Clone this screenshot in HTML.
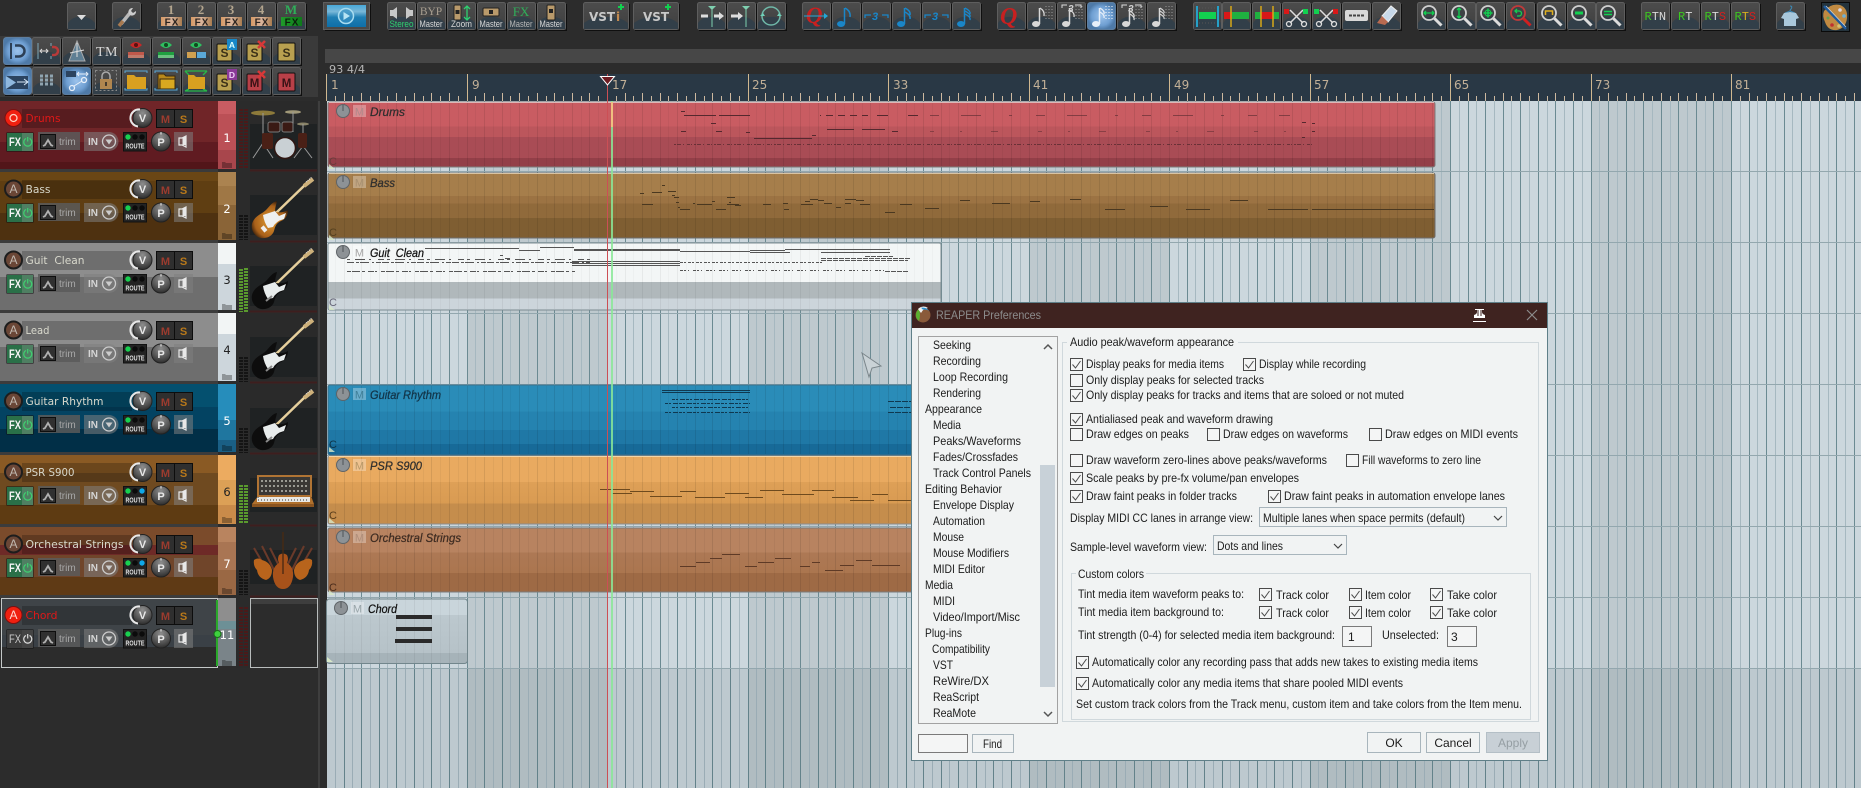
<!DOCTYPE html>
<html><head><meta charset="utf-8"><title>REAPER</title>
<style>
html,body{margin:0;padding:0;background:#2c2c2c;width:1861px;height:788px;overflow:hidden}
svg{display:block}
text{font-family:"Liberation Sans",sans-serif;white-space:pre}
.d text{font-size:12px;fill:#1b1b1b}
.ser{font-family:"Liberation Serif",serif;font-size:13px;font-weight:bold;fill:#b3a58e;text-anchor:middle}
.fxt{font-size:10px;font-weight:bold;fill:#2a2320;text-anchor:middle;letter-spacing:1px}
.lb{font-size:9.5px;fill:#d8d8d8}
.rl{font-family:"DejaVu Sans",sans-serif;font-size:12px;fill:#c2b097}
.nm{font-family:"DejaVu Sans",sans-serif;font-size:11px;fill:#d8d8cc}
.it{font-size:12px;font-style:italic;fill:#2e2e2e;stroke:#2e2e2e;stroke-width:.25}
.im{font-size:11px;fill:#7d7272;text-anchor:middle}
.tn{font-family:"DejaVu Sans",sans-serif;font-size:11.5px;text-anchor:middle}
.m{font-size:11px;font-weight:bold;fill:#9c3b2e;text-anchor:middle}
.s{font-size:11px;font-weight:bold;fill:#b8781a;text-anchor:middle}
.kv{font-size:11px;font-weight:bold;fill:#e8e8e8;text-anchor:middle}
.fxw{font-size:11.5px;font-weight:bold;fill:#f4f4f4}
.tr{font-size:10px;fill:#a8a8a8}
.in{font-size:10px;font-weight:bold;fill:#d5d5d5}
.ro{font-size:7px;font-weight:bold;fill:#e0e0e0}
.rt{font-family:"Liberation Mono",monospace;font-size:12px;fill:#d8d8d8}
</style></head>
<body>
<svg width="1861" height="788" viewBox="0 0 1861 788" xmlns="http://www.w3.org/2000/svg">
<defs>
<linearGradient id="bg" x2="0" y2="1"><stop offset="0" stop-color="#4c4c4c"/><stop offset="1" stop-color="#3f3f3f"/></linearGradient>
<g id="b"><rect x=".5" y=".5" width="28" height="27" rx="2" fill="url(#bg)" stroke="#5e5e5e"/><path d="M1 27V21Q6 14 14 15Q22 14 28 21V27Z" fill="#323f49"/><path d="M2 28.5H29.5V2" stroke="#0f0f0f" fill="none"/></g>
<radialGradient id="sel"><stop offset="0" stop-color="#9cc3ec"/><stop offset=".7" stop-color="#6f9fd2"/><stop offset="1" stop-color="#4e7aa8"/></radialGradient>
<g id="bs"><rect x=".5" y=".5" width="28" height="27" rx="3" fill="url(#sel)" stroke="#5d7ea0"/><path d="M2 28.5H29.5V2" stroke="#111" fill="none"/></g>
<linearGradient id="fx" x2="1"><stop offset="0" stop-color="#d69a66"/><stop offset=".5" stop-color="#d8b49c"/><stop offset="1" stop-color="#a87c50"/></linearGradient>
<linearGradient id="fxg" x2="1"><stop offset="0" stop-color="#1f9a2a"/><stop offset="1" stop-color="#0e7a1a"/></linearGradient>
<linearGradient id="pl" x2="0" y2="1"><stop offset="0" stop-color="#48a8d8"/><stop offset=".3" stop-color="#7ab8d8"/><stop offset=".55" stop-color="#1f7fb4"/><stop offset="1" stop-color="#0f6fa8"/></linearGradient>
<radialGradient id="kn" cx=".5" cy=".25" r=".85"><stop offset="0" stop-color="#8e8e8e"/><stop offset=".55" stop-color="#555"/><stop offset="1" stop-color="#1f1f1f"/></radialGradient>
<radialGradient id="sb" cx=".5" cy=".55" r=".6"><stop offset="0" stop-color="#e09a30"/><stop offset=".7" stop-color="#a8601a"/><stop offset="1" stop-color="#1c0e06"/></radialGradient>

<pattern id="gr" x="326" y="0" width="281" height="10" patternUnits="userSpaceOnUse">
<rect x="141" width="140" height="10" fill="#000" fill-opacity=".065"/>
<path d="M.5 0v10M18.5 0v10M35.5 0v10M53.5 0v10M70.5 0v10M88.5 0v10M105.5 0v10M123.5 0v10M141.5 0v10M158.5 0v10M176.5 0v10M193.5 0v10M211.5 0v10M228.5 0v10M246.5 0v10M263.5 0v10" stroke="#6b8a92"/>
<path d="M9.5 0v10M26.5 0v10M44.5 0v10M61.5 0v10M79.5 0v10M97.5 0v10M114.5 0v10M132.5 0v10M149.5 0v10M167.5 0v10M184.5 0v10M202.5 0v10M220.5 0v10M237.5 0v10M255.5 0v10M272.5 0v10" stroke="#a6b8c0"/>
</pattern>
<pattern id="ig" x="326" y="0" width="281" height="10" patternUnits="userSpaceOnUse">
<path d="M.5 0v10M18.5 0v10M35.5 0v10M53.5 0v10M70.5 0v10M88.5 0v10M105.5 0v10M123.5 0v10M141.5 0v10M158.5 0v10M176.5 0v10M193.5 0v10M211.5 0v10M228.5 0v10M246.5 0v10M263.5 0v10" stroke="#000" stroke-opacity=".09"/>
<path d="M9.5 0v10M26.5 0v10M44.5 0v10M61.5 0v10M79.5 0v10M97.5 0v10M114.5 0v10M132.5 0v10M149.5 0v10M167.5 0v10M184.5 0v10M202.5 0v10M220.5 0v10M237.5 0v10M255.5 0v10M272.5 0v10" stroke="#000" stroke-opacity=".045"/>
</pattern>
<pattern id="rt" x="326" y="74" width="281" height="27" patternUnits="userSpaceOnUse">
<path d="M18.5 19v8M35.5 19v8M53.5 19v8M70.5 19v8M88.5 19v8M105.5 19v8M123.5 19v8M158.5 19v8M176.5 19v8M193.5 19v8M211.5 19v8M228.5 19v8M246.5 19v8M263.5 19v8" stroke="#cdb9a0"/>
<path d="M9.5 22v5M26.5 22v5M44.5 22v5M61.5 22v5M79.5 22v5M97.5 22v5M114.5 22v5M132.5 22v5M149.5 22v5M167.5 22v5M184.5 22v5M202.5 22v5M220.5 22v5M237.5 22v5M255.5 22v5M272.5 22v5" stroke="#cdb9a0"/>
</pattern>

<!-- item colours -->
<linearGradient id="iD" x2="0" y2="1"><stop offset=".38" stop-color="#c95c62"/><stop offset=".38" stop-color="#bc565c"/><stop offset=".54" stop-color="#bc565c"/><stop offset=".54" stop-color="#a94c55"/><stop offset=".86" stop-color="#a94c55"/><stop offset=".86" stop-color="#933f48"/></linearGradient>
<linearGradient id="iB" x2="0" y2="1"><stop offset=".35" stop-color="#a67e4b"/><stop offset=".35" stop-color="#9c7343"/><stop offset=".47" stop-color="#9c7343"/><stop offset=".47" stop-color="#906a3b"/><stop offset=".69" stop-color="#906a3b"/><stop offset=".69" stop-color="#7f5e32"/></linearGradient>
<linearGradient id="iG" x2="0" y2="1"><stop offset=".58" stop-color="#f3f6f6"/><stop offset=".58" stop-color="#b0b8bb"/><stop offset=".83" stop-color="#b0b8bb"/><stop offset=".83" stop-color="#ccd5db"/></linearGradient>
<linearGradient id="iR" x2="0" y2="1"><stop offset=".38" stop-color="#2a8cb8"/><stop offset=".38" stop-color="#2583b0"/><stop offset=".64" stop-color="#2583b0"/><stop offset=".64" stop-color="#1f78a6"/><stop offset=".84" stop-color="#1f78a6"/><stop offset=".84" stop-color="#176a98"/></linearGradient>
<linearGradient id="iP" x2="0" y2="1"><stop offset=".38" stop-color="#e9aa60"/><stop offset=".38" stop-color="#dea057"/><stop offset=".7" stop-color="#d99b52"/><stop offset=".7" stop-color="#c58d4c"/></linearGradient>
<linearGradient id="iO" x2="0" y2="1"><stop offset=".38" stop-color="#b88360"/><stop offset=".38" stop-color="#ad7855"/><stop offset=".7" stop-color="#ab764f"/><stop offset=".7" stop-color="#9e6a45"/></linearGradient>
<linearGradient id="iC" x2="0" y2="1"><stop offset=".25" stop-color="#c9d5db"/><stop offset=".25" stop-color="#bcc8ce"/><stop offset=".84" stop-color="#b6c2c8"/><stop offset=".84" stop-color="#a6b3b9"/></linearGradient>

<!-- item head (no text) -->
<g id="ih"><circle cx="343" cy="9" r="6.5" fill="#8d9296" stroke="#5f6468"/><path d="M343 3v6" stroke="#4f5458"/><rect x="353" y="3" width="13" height="12" fill="#fff" fill-opacity=".3"/></g>
<path id="ft" d="M329 62l6 5h-6z" fill="#d8e8c8" fill-opacity=".8"/>

<!-- track controls (no text) -->
<g id="tc">
<rect x="22" y="8" width="110" height="19" fill="#000" fill-opacity=".22"/>
<rect x="38" y="31" width="42" height="18" fill="#5a5a5a" fill-opacity=".85"/>
<rect x="40.500" y="33.500" width="15" height="14" fill="#303030" stroke="#0e0e0e"/><path d="M43 45l2-1 3-5 3 5 2 1" stroke="#b0b0b0" stroke-width="1.800" fill="none"/>
<path d="M84 31h25a9.500 9.500 0 0 1 0 19h-25z" fill="#808080" fill-opacity=".55"/>
<circle cx="109" cy="40.500" r="6.500" fill="none" stroke="#ccc" stroke-width="1.300"/><path d="M105.500 38.500h7l-3.500 5z" fill="#ccc"/>
<rect x="123.500" y="31.500" width="23" height="18.500" fill="#232323" stroke="#111"/>
<circle cx="128" cy="36" r="2.700" fill="#18d050"/><circle cx="135" cy="36" r="2.700" fill="#0b0b0b"/><circle cx="142" cy="36" r="2.700" fill="#0b0b0b"/>
<circle cx="161" cy="40.500" r="9.500" fill="url(#kn)" stroke="#222"/><path d="M161 31v2.500" stroke="#eee"/>
<rect x="174" y="31" width="19" height="19" fill="#808080" fill-opacity=".55"/><path d="M179 37h3l4-2v11l-4-2h-3z" fill="none" stroke="#e8e8e8" stroke-width="1.200"/><path d="M182.500 37v7h3v-9z" fill="#e8e8e8"/>
<rect x="156.500" y="8.500" width="36" height="18" fill="#2f2f2f" stroke="#0d0d0d"/><path d="M174.500 8v19" stroke="#0d0d0d"/>
<circle cx="142.500" cy="17" r="9.500" fill="url(#kn)" stroke="#222"/>
<path d="M138 25.500a8.500 8.500 0 0 1 2-17" fill="none" stroke="#e8e8e8" stroke-width="2"/>
</g>
<g id="fg"><rect x="6.500" y="31.500" width="27" height="19" fill="#111"/><rect x="7" y="32" width="15" height="18" fill="#2a7048"/><rect x="22" y="32" width="11" height="18" fill="#4f7f62"/><path d="M26 37.500a4 4 0 1 0 3.500 0M27.700 36v4.500" fill="none" stroke="#3fd070" stroke-width="1.200"/></g>
<g id="fd"><rect x="6.500" y="31.500" width="27" height="19" fill="#111"/><rect x="7" y="32" width="15" height="18" fill="#3c3c3c"/><rect x="22" y="32" width="11" height="18" fill="#444"/><path d="M26 37.500a4 4 0 1 0 3.500 0M27.700 36v4.500" fill="none" stroke="#ddd" stroke-width="1.200"/></g>
<g id="ra"><circle cx="13.500" cy="17" r="8.500" fill="#6a4636" stroke="#1d1d1d" stroke-width="2"/></g>
<path id="fo" d="M222 67v-6h3l1 1h6v5z" fill="#000" fill-opacity=".3"/>

<!-- guitar -->
<g id="ne"><path d="M276 41L306 12" stroke="#e6cf9c" stroke-width="2.500"/><path d="M304 14l9-7" stroke="#cdb07a" stroke-width="4"/><path d="M306 10l6-5" stroke="#eee" stroke-dasharray="1 1"/></g>
<g id="gt"><use href="#ne"/>
<path d="M252 52C254 44 262 42 266 38C270 34 272 30 277 29C276 34 274 38 276 40C280 41 285 40 288 38C288 44 284 48 281 49C276 51 275 55 274 59C272 65 264 68 258 65C253 62 251 57 252 52Z" fill="#0d0d0d"/>
<path d="M263 43L275 39L279 44L286 41L284 47Q276 49 273 55L268 56Q264 50 263 43Z" fill="#e8ecec"/><path d="M266 58l6-5" stroke="#8a8a8a" stroke-width="2"/></g>

<!-- checkbox -->
<g id="c"><rect x=".5" y=".5" width="12" height="12" fill="#f4f5f5" stroke="#4a4a4a"/><path d="M2.500 6.500l3 3.500 5-7" fill="none" stroke="#4a4a4a"/></g>
<g id="u"><rect x=".5" y=".5" width="12" height="12" fill="#f4f5f5" stroke="#4a4a4a"/></g>
<g id="mg"><circle cx="12" cy="11" r="7" fill="#2f3a42" fill-opacity=".4" stroke="#d0d0d0" stroke-width="1.800"/><path d="M17.500 16.500l7 7" stroke="#dcdcdc" stroke-width="3"/></g>
<g id="nt"><ellipse cx="9" cy="22" rx="4" ry="3" fill="currentColor"/><path d="M12.500 22V6" stroke="currentColor" stroke-width="1.500"/></g>
<g id="dg"><path d="M19 4v13M22 4v13M25 4v13" stroke="#999" stroke-dasharray="1 2"/></g>
<g id="sc"><path d="M8 8l13 13M21 8L8 21" stroke="#ddd" stroke-width="1.500"/><circle cx="7" cy="22" r="2.500" fill="none" stroke="#ddd" stroke-width="1.300"/><circle cx="22" cy="22" r="2.500" fill="none" stroke="#ddd" stroke-width="1.300"/></g>
</defs>

<rect width="1861" height="788" fill="#2c2c2c"/>

<!-- top row toolbar -->
<g transform="translate(67,2)"><use href="#b"/><path d="M10 13h9l-4.500 5z" fill="#ddd"/></g>
<g transform="translate(112,2)"><use href="#b"/><path d="M9 22l9-11" stroke="#b9b9b9" stroke-width="3.500"/><path d="M17 12a4 4 0 0 1 4-6l-2 3 2 2 3-2a4 4 0 0 1-6 4" fill="#ccc"/><path d="M7 24l4-5" stroke="#a87a50" stroke-width="3.500"/></g>
<g transform="translate(157,2)"><use href="#b"/><text class="ser" x="14" y="12">1</text><rect x="4" y="15" width="21" height="9" fill="url(#fx)"/><text class="fxt" x="15" y="23.500">FX</text></g>
<g transform="translate(187,2)"><use href="#b"/><text class="ser" x="14" y="12">2</text><rect x="4" y="15" width="21" height="9" fill="url(#fx)"/><text class="fxt" x="15" y="23.500">FX</text></g>
<g transform="translate(217,2)"><use href="#b"/><text class="ser" x="14" y="12">3</text><rect x="4" y="15" width="21" height="9" fill="url(#fx)"/><text class="fxt" x="15" y="23.500">FX</text></g>
<g transform="translate(247,2)"><use href="#b"/><text class="ser" x="14" y="12">4</text><rect x="4" y="15" width="21" height="9" fill="url(#fx)"/><text class="fxt" x="15" y="23.500">FX</text></g>
<g transform="translate(277,2)"><use href="#b"/><text class="ser" x="14" y="12" style="fill:#2fae5a">M</text><rect x="4" y="15" width="21" height="9" fill="url(#fxg)"/><text class="fxt" x="15" y="23.500" style="fill:#0c1f0c">FX</text></g>
<g transform="translate(323,2)"><rect x=".5" y=".5" width="46" height="27" fill="#4a4a4a" stroke="#5e5e5e"/><path d="M2 28.500H47.500V2" stroke="#0f0f0f" fill="none"/><rect x="4" y="3" width="39" height="22" fill="url(#pl)"/><circle cx="23" cy="14" r="7.500" fill="#3b93c4" fill-opacity=".7" stroke="#a8dcf0" stroke-width="1.500"/><path d="M20.500 10l6.500 4-6.500 4z" fill="#b8e4f4"/></g>
<g transform="translate(387,2)"><use href="#b"/><path d="M3 8h3l4-3v12l-4-3H3zM19 5l4 3h3v6h-3l-4 3z" fill="#c8c8c8"/><text class="lb" x="2.500" y="25" textLength="24" lengthAdjust="spacingAndGlyphs" style="fill:#2fd070">Stereo</text></g>
<g transform="translate(417,2)"><use href="#b"/><text class="ser" x="14" y="13" style="font-weight:normal;font-size:11.500px;fill:#a89e90">BYP</text><text class="lb" x="2.500" y="25" textLength="23" lengthAdjust="spacingAndGlyphs">Master</text></g>
<g transform="translate(447,2)"><use href="#b"/><rect x="7" y="3" width="7" height="15" rx="1" fill="#b99a6b" stroke="#222"/><rect x="8.500" y="8" width="4" height="4" fill="#222"/><path d="M20 4v14M17 7l3-3 3 3M17 15l3 3 3-3" stroke="#2fd070" fill="none" stroke-width="1.300"/><text class="lb" x="4" y="25" textLength="21" lengthAdjust="spacingAndGlyphs">Zoom</text></g>
<g transform="translate(477,2)"><use href="#b"/><rect x="6" y="6" width="16" height="8" rx="1" fill="#b99a6b" stroke="#222"/><rect x="12" y="8" width="4" height="4" fill="#222"/><text class="lb" x="2.500" y="25" textLength="23" lengthAdjust="spacingAndGlyphs">Master</text></g>
<g transform="translate(507,2)"><use href="#b"/><text class="ser" x="14" y="14" style="font-weight:normal;font-size:13px;fill:#2fae5a">FX</text><text class="lb" x="2.500" y="25" textLength="23" lengthAdjust="spacingAndGlyphs" style="fill:#b8b8b8">Master</text></g>
<g transform="translate(537,2)"><use href="#b"/><rect x="10" y="3" width="8" height="15" rx="1" fill="#b99a6b" stroke="#222"/><rect x="12" y="7" width="4" height="4" fill="#222"/><text class="lb" x="2.500" y="25" textLength="23" lengthAdjust="spacingAndGlyphs">Master</text></g>
<g transform="translate(583,2)"><rect x=".5" y=".5" width="45" height="27" rx="2" fill="url(#bg)" stroke="#5e5e5e"/><path d="M1 27V21Q10 14 23 15Q36 14 45 21V27Z" fill="#323f49"/><path d="M2 28.500H46.500V2" stroke="#0f0f0f" fill="none"/><text x="6" y="19" style="font-family:'DejaVu Sans',sans-serif;font-weight:bold;font-size:12px;fill:#c8c8c8">VST</text><text x="33" y="19" style="font-family:'DejaVu Sans',sans-serif;font-weight:bold;font-size:12px;fill:#c28a50">i</text><path d="M38 2v6M35 5h6" stroke="#12d050" stroke-width="2"/></g>
<g transform="translate(633,2)"><rect x=".5" y=".5" width="45" height="27" rx="2" fill="url(#bg)" stroke="#5e5e5e"/><path d="M1 27V21Q10 14 23 15Q36 14 45 21V27Z" fill="#323f49"/><path d="M2 28.500H46.500V2" stroke="#0f0f0f" fill="none"/><text x="10" y="19" style="font-family:'DejaVu Sans',sans-serif;font-weight:bold;font-size:12px;fill:#c8c8c8">VST</text><path d="M35 2v6M32 5h6" stroke="#12d050" stroke-width="2"/></g>

<g transform="translate(697,2)"><use href="#b"/><path d="M11 4h8l-4 4z" fill="#7fd0b0"/><path d="M15 6v19" stroke="#7fd0b0"/><path d="M4 14h7M17 14h5" stroke="#ddd" stroke-width="3"/><path d="M22 10l5 4-5 4z" fill="#ddd"/></g>
<g transform="translate(727,2)"><use href="#b"/><path d="M15 4h8l-4 4z" fill="#7fd0b0"/><path d="M19 6v19" stroke="#7fd0b0"/><path d="M4 14h7" stroke="#ddd" stroke-width="3"/><path d="M11 10l5 4-5 4z" fill="#ddd"/></g>
<g transform="translate(757,2)"><use href="#b"/><path d="M5 14a9 9 0 0 1 18 0a9 9 0 0 1-18 0" fill="none" stroke="#6fb8a8" stroke-width="1.500"/><path d="M3 14l3-3 2 3zM25 14l-3-3-2 3z" fill="#6fd0b8"/></g>

<g transform="translate(802,2)"><use href="#b"/><text x="4" y="21" style="font-family:'Liberation Serif',serif;font-size:23px;font-style:italic;font-weight:bold;fill:#c82020">Q</text><path d="M2 14h22" stroke="#22a8d8"/><path d="M22 11l4 3-4 3z" fill="#22a8d8"/></g>
<g transform="translate(832,2)" color="#1a86c8"><use href="#b"/><use href="#nt"/><path d="M13 6q6 3 5 9" fill="none" stroke="#1a86c8" stroke-width="1.500"/></g>
<g transform="translate(862,2)"><use href="#b"/><path d="M3 16v-3h6M26 16v-3h-6" stroke="#1a86c8" fill="none" stroke-width="1.300"/><text x="10" y="18" style="font-size:11px;font-weight:bold;font-style:italic;fill:#1a86c8">3</text></g>
<g transform="translate(892,2)" color="#1a86c8"><use href="#b"/><use href="#nt"/><path d="M13 6q6 3 5 7M13 10q6 3 5 7" fill="none" stroke="#1a86c8" stroke-width="1.500"/></g>
<g transform="translate(922,2)"><use href="#b"/><path d="M3 16v-3h6M26 16v-3h-6" stroke="#1a86c8" fill="none" stroke-width="1.300"/><text x="10" y="18" style="font-size:11px;font-weight:bold;font-style:italic;fill:#1a86c8">3</text></g>
<g transform="translate(952,2)" color="#1a86c8"><use href="#b"/><use href="#nt"/><path d="M13 6q6 3 5 6M13 9q6 3 5 6M13 12q6 3 5 6" fill="none" stroke="#1a86c8" stroke-width="1.300"/></g>

<g transform="translate(997,2)"><use href="#b"/><text x="3" y="22" style="font-family:'Liberation Serif',serif;font-size:24px;font-style:italic;font-weight:bold;fill:#c82020">Q</text></g>
<g transform="translate(1027,2)" color="#d8d8d8"><use href="#b"/><use href="#dg"/><use href="#nt"/><path d="M13 6q5 3 4 8" fill="none" stroke="#d8d8d8" stroke-width="1.300"/></g>
<g transform="translate(1057,2)" color="#d8d8d8"><use href="#b"/><use href="#dg"/><use href="#nt"/><path d="M5 6V3h5M18 3h6v3" stroke="#ddd" fill="none"/><text x="11" y="10" style="font-size:10px;font-weight:bold;font-style:italic;fill:#d0d0d0">3</text><path d="M13 8q5 3 4 7" fill="none" stroke="#d8d8d8" stroke-width="1.300"/></g>
<g transform="translate(1087,2)" color="#e8f0fa"><use href="#bs"/><path d="M19 4v13M22 4v13M25 4v13" stroke="#fff" stroke-dasharray="1 2"/><use href="#nt"/><path d="M13 6q5 3 4 6M13 10q5 3 4 6" fill="none" stroke="#e8f0fa" stroke-width="1.300"/></g>
<g transform="translate(1117,2)" color="#d8d8d8"><use href="#b"/><use href="#dg"/><use href="#nt"/><path d="M5 6V3h5M18 3h6v3" stroke="#ddd" fill="none"/><text x="11" y="10" style="font-size:10px;font-weight:bold;font-style:italic;fill:#d0d0d0">3</text><path d="M13 9q5 3 4 6M13 12q5 3 4 6" fill="none" stroke="#d8d8d8" stroke-width="1.300"/></g>
<g transform="translate(1147,2)" color="#d8d8d8"><use href="#b"/><use href="#dg"/><use href="#nt"/><path d="M13 6q5 3 4 5M13 9q5 3 4 5M13 12q5 3 4 5" fill="none" stroke="#d8d8d8" stroke-width="1.200"/></g>

<g transform="translate(1193,2)"><use href="#b"/><path d="M4 4v21M25 4v21" stroke="#25a0c8" stroke-width="2"/><rect x="6" y="10" width="17" height="7" fill="#12d050"/><path d="M6 6h17M6 21h17" stroke="#555" stroke-dasharray="1 2"/></g>
<g transform="translate(1222,2)"><use href="#b"/><rect x="2" y="10" width="8" height="7" fill="#d81818"/><rect x="10" y="10" width="17" height="7" fill="#1fb040"/><path d="M9 4v21" stroke="#d8a818" stroke-width="1.500"/></g>
<g transform="translate(1252,2)"><use href="#b"/><rect x="3" y="10" width="6" height="7" fill="#1fb040"/><rect x="9" y="10" width="12" height="7" fill="#d81818"/><rect x="21" y="10" width="6" height="7" fill="#1fb040"/><path d="M9 4v21M21 4v21" stroke="#d8a818" stroke-width="1.500"/></g>
<g transform="translate(1282,2)"><use href="#b"/><use href="#sc"/><rect x="2" y="7" width="5" height="5" fill="#d81818"/><rect x="21" y="7" width="5" height="5" fill="#12d050"/></g>
<g transform="translate(1312,2)"><use href="#b"/><use href="#sc"/><rect x="2" y="7" width="5" height="5" fill="#12d050"/><rect x="21" y="7" width="5" height="5" fill="#d81818"/></g>
<g transform="translate(1342,2)"><use href="#b"/><rect x="3" y="8" width="23" height="11" rx="2" fill="#d8d8d8"/><path d="M7 13.500h15" stroke="#444" stroke-width="2" stroke-dasharray="3 1"/></g>
<g transform="translate(1372,2)"><use href="#b"/><path d="M10 14l9-10 6 5-9 11z" fill="#c8d8e8" stroke="#eee"/><path d="M5 21l5-7 6 6-3 3z" fill="#b86a50"/></g>

<g transform="translate(1417,2)"><use href="#b"/><use href="#mg"/><path d="M7.500 11h9M9 9l-2 2 2 2M15 9l2 2-2 2" stroke="#12d050" fill="none" stroke-width="1.300"/></g>
<g transform="translate(1447,2)"><use href="#b"/><use href="#mg"/><path d="M12 6.500v9M10 8l2-2 2 2M10 14l2 2 2-2" stroke="#12d050" fill="none" stroke-width="1.300"/></g>
<g transform="translate(1476,2)"><use href="#b"/><use href="#mg"/><path d="M12 6.500v9M7.500 11h9" stroke="#12d050" stroke-width="1.500"/><circle cx="12" cy="11" r="3" fill="none" stroke="#12d050"/></g>
<g transform="translate(1506,2)"><use href="#b"/><circle cx="12" cy="11" r="7" fill="#2f3a42" fill-opacity=".4" stroke="#c03a3a" stroke-width="1.800"/><path d="M17.500 16.500l7 7" stroke="#d02020" stroke-width="3"/><path d="M9 9h4a2.500 2.500 0 0 1 0 5h-2M11 7L9 9l2 2" stroke="#12d050" fill="none" stroke-width="1.300"/></g>
<g transform="translate(1537,2)"><use href="#b"/><use href="#mg"/><path d="M8.500 13V9h7v4" stroke="#e0b020" fill="none" stroke-width="1.500"/></g>
<g transform="translate(1567,2)"><use href="#b"/><use href="#mg"/><rect x="8" y="9.500" width="8" height="3" fill="#12d050"/></g>
<g transform="translate(1596,2)"><use href="#b"/><use href="#mg"/><path d="M8 9.500h8M8 12.500h8" stroke="#12d050" stroke-width="1.500"/></g>

<g transform="translate(1641,2)"><use href="#b"/><text class="rt" x="3.500" y="18"><tspan fill="#3cc820">R</tspan>TN</text></g>
<g transform="translate(1671,2)"><use href="#b"/><text class="rt" x="7" y="18"><tspan fill="#3cc820">R</tspan>T</text></g>
<g transform="translate(1701,2)"><use href="#b"/><text class="rt" x="3.500" y="18"><tspan fill="#3cc820">R</tspan>T<tspan fill="#d02020">S</tspan></text></g>
<g transform="translate(1731,2)"><use href="#b"/><text class="rt" x="3.500" y="18"><tspan fill="#3cc820">R</tspan><tspan fill="#d8b020">T</tspan><tspan fill="#d02020">S</tspan></text></g>
<g transform="translate(1776,2)"><use href="#b"/><path d="M14 4q3 0 1 3q-1 1-1 2M9 11l5-2 5 2" stroke="#3b8ab8" fill="none"/><path d="M8 11l6-1 6 1 3 5-3 1v7H8v-7l-3-1z" fill="#a9c8dc"/></g>
<g transform="translate(1821,2)"><rect x=".5" y=".5" width="28" height="29" fill="#24333c" stroke="#0a0a0a"/><path d="M3 9q7-8 16-6q8 3 7 13q-1 10-10 12q-9 1-12-8q-3-6-1-11z" fill="#c08a42"/><path d="M3 4l22 23" stroke="#1f5a9c" stroke-width="2.500"/><path d="M5 4l20 21" stroke="#cfd6dc" stroke-width=".7"/><circle cx="19" cy="8" r="1.800" fill="#d8d8e8"/><circle cx="23" cy="14" r="1.800" fill="#6cb0d8"/><circle cx="11" cy="23" r="1.800" fill="#c03030"/><circle cx="18" cy="24" r="1.800" fill="#d8c070"/><circle cx="7" cy="16" r="1.500" fill="#68a050"/></g>

<!-- left second/third row panel -->
<rect x="0" y="36" width="318" height="61" fill="#3a3a3a"/>
<g transform="translate(3,37)"><use href="#bs"/><path d="M8 6v16" stroke="#2c3f55" stroke-width="2"/><path d="M12 8.500h4a5.500 5.500 0 0 1 0 11h-4" fill="none" stroke="#2c3f55" stroke-width="2.500"/></g>
<g transform="translate(32,37)"><use href="#b"/><path d="M6 6v16" stroke="#7fa8b8"/><path d="M9 14h6M10 12l-2 2 2 2M14 12l2 2-2 2" stroke="#ddd" fill="none"/><path d="M20 10h2a4 4 0 0 1 0 8h-2" fill="none" stroke="#b83a3a" stroke-width="2.500"/><path d="M19 6v3M19 19v3" stroke="#7fa8b8"/></g>
<g transform="translate(62,37)"><use href="#b"/><path d="M15 4L7 24h16z" fill="#5f7f94" stroke="#aaa"/><path d="M15 6v14M8 16l14-3" stroke="#ddd"/></g>
<g transform="translate(92,37)"><use href="#b"/><text x="4" y="19" style="font-family:'Liberation Serif',serif;font-size:14px;fill:#d8d8d8;letter-spacing:.5px">TM</text></g>
<g transform="translate(122,37)"><use href="#b"/><path d="M8 8q6-6 12 0q-6 6-12 0z" fill="#c82828"/><circle cx="14" cy="8" r="2" fill="#5a1010"/><rect x="6" y="15" width="16" height="3" fill="#c0584a"/><rect x="6" y="18" width="16" height="3" fill="#c07a6a"/></g>
<g transform="translate(152,37)"><use href="#b"/><path d="M8 8q6-6 12 0q-6 6-12 0z" fill="#2fc060"/><circle cx="14" cy="8" r="2" fill="#0f4a20"/><rect x="6" y="15" width="16" height="3" fill="#1fa040"/><rect x="6" y="18" width="16" height="3" fill="#6cc080"/></g>
<g transform="translate(182,37)"><use href="#b"/><path d="M8 8q6-6 12 0q-6 6-12 0z" fill="#2fc060"/><circle cx="14" cy="8" r="2" fill="#0f4a20"/><rect x="5" y="15" width="9" height="6" fill="#d0a050"/><rect x="15" y="15" width="9" height="6" fill="#5aa8d8"/></g>
<g transform="translate(212,37)"><use href="#b"/><rect x="5" y="7" width="15" height="17" rx="1" fill="#b8a050" stroke="#111"/><text x="12.500" y="20" style="font-size:12px;font-weight:bold;fill:#3a3018;text-anchor:middle">S</text><rect x="15" y="2" width="10" height="11" fill="#1888c8"/><text x="20" y="11" style="font-size:8.500px;font-weight:bold;fill:#dff;text-anchor:middle">A</text></g>
<g transform="translate(242,37)"><use href="#b"/><rect x="5" y="7" width="15" height="17" rx="1" fill="#b8a050" stroke="#111"/><text x="12.500" y="20" style="font-size:12px;font-weight:bold;fill:#3a3018;text-anchor:middle">S</text><path d="M16 4l7 7M23 4l-7 7" stroke="#d83838" stroke-width="2.500"/></g>
<g transform="translate(272,37)"><use href="#b"/><rect x="6" y="6" width="17" height="18" rx="1" fill="#b8a050" stroke="#111"/><text x="14.500" y="20" style="font-size:12px;font-weight:bold;fill:#3a3018;text-anchor:middle">S</text></g>

<g transform="translate(3,67)"><use href="#bs"/><rect x="3" y="9" width="22" height="13" fill="#2c4460"/><path d="M3 9l10 6.500-10 6.500z" fill="#8fb8de"/><path d="M14 15h11M21 12l4 3-4 3" stroke="#d8e8f8" fill="none"/></g>
<g transform="translate(32,67)"><use href="#b"/><path d="M8 9h14M8 13h14M8 17h14" stroke="#8fa4b0" stroke-width="3" stroke-dasharray="3 2"/></g>
<g transform="translate(62,67)"><use href="#bs"/><rect x="4" y="4" width="10" height="6" fill="#2c4460"/><path d="M16 7h9M17 5l-2 2 2 2M24 5l2 2-2 2" stroke="#e8f0fa" fill="none"/><circle cx="10" cy="21" r="2.500" fill="none" stroke="#e8f0fa" stroke-width="1.300"/><circle cx="22" cy="13" r="2.500" fill="none" stroke="#e8f0fa" stroke-width="1.300"/><path d="M12 19l8-5" stroke="#e8f0fa"/></g>
<g transform="translate(92,67)"><use href="#b"/><rect x="3.500" y="3.500" width="21" height="20" fill="none" stroke="#888" stroke-dasharray="2 2"/><path d="M10 12V9a4 4 0 0 1 8 0v3" fill="none" stroke="#aaa" stroke-width="1.500"/><rect x="8" y="12" width="12" height="10" fill="#b0864f"/><path d="M14 15v4" stroke="#222" stroke-width="1.500"/></g>
<g transform="translate(122,67)"><use href="#b"/><path d="M3 6v-2h22v2M3 21v2h22v-2" stroke="#5aa8d8" fill="none"/><path d="M5 8h7l2 2h10v12H5z" fill="#d8a020"/></g>
<g transform="translate(152,67)"><use href="#b"/><path d="M3 6v-2h22v2M3 21v2h22v-2" stroke="#5aa8d8" fill="none"/><path d="M6 7h6l2 2h9v13H6z" fill="#b8881a" stroke="#3a2a10"/><rect x="8" y="12" width="15" height="10" fill="#d8a820" stroke="#3a2a10"/></g>
<g transform="translate(182,67)"><use href="#b"/><path d="M3 4h22M3 24h22M3 4l4 4M25 4l-4 4M3 24l4-2M25 24l-4-2" stroke="#28b848" fill="none" stroke-width="1.300"/><path d="M6 8h6l2 2h9v12H6z" fill="#d8a020"/></g>
<g transform="translate(212,67)"><use href="#b"/><rect x="5" y="7" width="15" height="17" rx="1" fill="#b8a050" stroke="#111"/><text x="12.500" y="20" style="font-size:12px;font-weight:bold;fill:#3a3018;text-anchor:middle">S</text><rect x="15" y="2" width="10" height="11" fill="#8a3a98"/><text x="20" y="11" style="font-size:8.500px;font-weight:bold;fill:#f0d0f8;text-anchor:middle">D</text></g>
<g transform="translate(242,67)"><use href="#b"/><rect x="5" y="7" width="15" height="17" rx="1" fill="#b84048" stroke="#111"/><text x="12.500" y="20" style="font-size:11.500px;font-weight:bold;fill:#3a1216;text-anchor:middle">M</text><path d="M16 4l7 7M23 4l-7 7" stroke="#d83838" stroke-width="2.500"/></g>
<g transform="translate(272,67)"><use href="#b"/><rect x="6" y="6" width="17" height="18" rx="1" fill="#b84048" stroke="#111"/><text x="14.500" y="20" style="font-size:11.500px;font-weight:bold;fill:#3a1216;text-anchor:middle">M</text></g>

<!-- ruler -->
<rect x="325" y="49" width="1536" height="14" fill="#474747"/>
<text x="329" y="73" textLength="36" lengthAdjust="spacingAndGlyphs" style="font-family:'DejaVu Sans',sans-serif;font-size:10.500px;fill:#b5b5b5">93 4/4</text>
<rect x="326" y="74" width="1535" height="27" fill="#293845"/>
<rect x="326" y="74" width="1535" height="27" fill="url(#rt)"/>
<path d="M326.500 74v27M467.500 74v27M607.500 74v27M748.500 74v27M888.500 74v27M1029.500 74v27M1169.500 74v27M1310.500 74v27M1450.500 74v27M1591.500 74v27M1731.500 74v27" stroke="#d0b890"/>
<g class="rl"><text class="rl" x="331" y="89">1</text><text class="rl" x="472" y="89">9</text><text class="rl" x="612" y="89">17</text><text class="rl" x="752" y="89">25</text><text class="rl" x="893" y="89">33</text><text class="rl" x="1033" y="89">41</text><text class="rl" x="1174" y="89">49</text><text class="rl" x="1314" y="89">57</text><text class="rl" x="1454" y="89">65</text><text class="rl" x="1595" y="89">73</text><text class="rl" x="1735" y="89">81</text></g>

<!-- arrange -->
<rect x="327" y="101" width="1534" height="687" fill="#ccd7dd"/>
<rect x="327" y="101" width="1534" height="687" fill="url(#gr)"/>
<path d="M327 171.500H1861M327 242.500H1861M327 313.500H1861M327 384.500H1861M327 455.500H1861M327 526.500H1861M327 597.500H1861M327 668.500H1861" stroke="#93a7ae"/>
<rect x="327" y="669" width="1534" height="119" fill="#0a2a35" fill-opacity=".08"/>
<rect x="318" y="101" width="2" height="687" fill="#3e3e3e"/>

<!-- items -->
<rect x="328" y="102" width="1107" height="65" rx="2" fill="url(#iD)" stroke="#7c7c7c"/><rect x="329" y="103" width="1105" height="63" fill="url(#ig)"/><path d="M329 102.500H1434" stroke="#dfb6b6"/>
<rect x="328" y="173" width="1107" height="65" rx="2" fill="url(#iB)" stroke="#6c6c6c"/><rect x="329" y="174" width="1105" height="63" fill="url(#ig)"/><path d="M329 173.500H1434" stroke="#d8c4a4"/>
<rect x="328" y="243" width="613" height="67" rx="2" fill="url(#iG)" stroke="#7c8c92"/><rect x="329" y="244" width="611" height="65" fill="url(#ig)" opacity=".6"/>
<rect x="328" y="385" width="1107" height="70" rx="2" fill="url(#iR)" stroke="#3f6f88"/><rect x="329" y="386" width="1105" height="68" fill="url(#ig)"/>
<rect x="328" y="456" width="1107" height="68" rx="2" fill="url(#iP)" stroke="#8c8c8c"/><rect x="329" y="457" width="1105" height="66" fill="url(#ig)"/><path d="M329 456.500H1434" stroke="#f3d6a8"/>
<rect x="328" y="528" width="1107" height="64" rx="2" fill="url(#iO)" stroke="#7a7a7a"/><rect x="329" y="529" width="1105" height="62" fill="url(#ig)"/>
<rect x="326.500" y="599" width="141" height="64.500" rx="3" fill="url(#iC)" stroke="#72868c"/>
<rect x="327" y="600" width="140" height="63" fill="url(#ig)" opacity=".6"/>

<g transform="translate(0,102)"><use href="#ih"/><text class="im" x="359.500" y="13.500" style="fill:#b08a8a">M</text><text class="it" x="370" y="14" textLength="35" lengthAdjust="spacingAndGlyphs">Drums</text><text x="329" y="63" style="font-size:11px;fill:#6a3c3c">C</text><use href="#ft"/></g>
<g transform="translate(0,173)"><use href="#ih"/><text class="im" x="359.500" y="13.500" style="fill:#a89070">M</text><text class="it" x="370" y="14" textLength="25" lengthAdjust="spacingAndGlyphs">Bass</text><text x="329" y="63" style="font-size:11px;fill:#54401f">C</text><use href="#ft"/></g>
<g transform="translate(0,243)"><use href="#ih"/><text class="im" x="359.500" y="13.500" style="fill:#a5a5a5">M</text><text class="it" x="370" y="14" textLength="54" lengthAdjust="spacingAndGlyphs" style="fill:#111;stroke:#111">Guit  Clean</text><text x="329" y="63" style="font-size:11px;fill:#667">C</text><use href="#ft"/></g>
<g transform="translate(0,385)"><use href="#ih"/><text class="im" x="359.500" y="13.500" style="fill:#3f7f98">M</text><text class="it" x="370" y="14" textLength="71" lengthAdjust="spacingAndGlyphs" style="fill:#123448;stroke:#123448">Guitar Rhythm</text><text x="329" y="63" style="font-size:11px;fill:#0e3448">C</text><use href="#ft"/></g>
<g transform="translate(0,456)"><use href="#ih"/><text class="im" x="359.500" y="13.500" style="fill:#b89868">M</text><text class="it" x="370" y="14" textLength="52" lengthAdjust="spacingAndGlyphs">PSR S900</text><text x="329" y="63" style="font-size:11px;fill:#5a3e1c">C</text><use href="#ft"/></g>
<g transform="translate(0,528)"><use href="#ih"/><text class="im" x="359.500" y="13.500" style="fill:#b08e7a">M</text><text class="it" x="370" y="14" textLength="91" lengthAdjust="spacingAndGlyphs" style="fill:#3e2c22;stroke:#3e2c22">Orchestral Strings</text><text x="329" y="63" style="font-size:11px;fill:#4a2c1c">C</text><use href="#ft"/></g>
<g transform="translate(-2,599)"><use href="#ih"/><text class="im" x="359.500" y="13.500" style="fill:#98a4a8">M</text><path d="M329 58l6 5h-6z" fill="#d8e8c8"/><text class="it" x="370" y="14" textLength="29" lengthAdjust="spacingAndGlyphs" style="fill:#111;stroke:#111">Chord</text></g>
<path d="M396 617h36M396 629h36M395 641h37" stroke="#2a2a2a" stroke-width="4"/>

<!-- MIDI notes -->
<g fill="none" stroke="#55282e">
<path d="M681 111.500h4M684 115.500h32M719 115.500h31M711 123.500h5M681 131.500h5M716 131.500h6M746 132.500h4M754 138.500h58M812 135.500h4M827 129.500h27M862 129.500h23M892 131.500h6M820 115.500h1M826 115.500h7M838 115.500h7M850 115.500h7M862 115.500h6M877 115.500h11M908 115.500h10M1302 122.500h4M1312 123.500h3M1312 131.500h3M1302 137.500h3"/>
<path d="M674 144.500H1314" stroke-opacity=".75" stroke-dasharray="2 1 4 2 1 3 3 1 1 2"/>
<path d="M930 115.500H1290" stroke-opacity=".6" stroke-dasharray="9 22 20 28 3 24"/>
<path d="M930 131.500H1290" stroke-opacity=".5" stroke-dasharray="4 26 2 29 7 40"/>
</g>
<g fill="none" stroke="#4a3820">
<path d="M640 193.500h4M652 192.500h10M662 185.500h3M668 191.500h8M672 195.500h3M674 197.500h5M642 204.500h11M676 202.500h3M678 207.500h2M680 209.500h10M693 203.500h2M697 204.500h15M712 201.500h3M727 197.500h8M729 202.500h2M727 204.500h12M735 205.500h6M716 209.500h10M763 204.500h8M783 203.500h5M784 209.500h5M801 204.500h12M805 201.500h5M810 199.500h8M818 200.500h6M824 203.500h8M836 207.500h5M845 203.500h6M845 199.500h11M856 200.500h8M860 204.500h10M885 212.500h10M900 204.500h12M925 208.500h14M960 200.500h10M992 203.500h18M1030 201.500h10M1070 199.500h11M1105 209.500h20M1150 206.500h18M1186 209.500h24M1230 200.500h18M1268 209.500h40M1312 209.500h122"/>
</g>
<g fill="none" stroke="#555">
<path d="M425 248.500h94M519 250.500h21M540 247.500h34M574 249.500h106M574 250.500h106M680 251.500h70M750 250.500h35M785 249.500h36M821 249.500h69M750 252.500h40M821 252.500h69"/>
<path d="M347 262.500H590" stroke-dasharray="7 2 3 1 9 3 2 2 5 1"/>
<path d="M347 259.500H590" stroke-dasharray="3 5 10 4 2 7 6 3"/>
<path d="M347 271.500H575" stroke-dasharray="4 1 8 2 3 3 6 1 2 4"/>
<path d="M572 261.500H680M572 263.500H680M572 265.500h108"/>
<path d="M680 262.500H822" stroke-dasharray="3 1 2 2"/>
<path d="M680 270.500H885" stroke-dasharray="3 1 2 2 1 4"/>
<path d="M500 255.500h3M505 258.500h5"/>
<path d="M821 258.500H908M821 260.500H908M865 256.500h28M885 271.500h24" stroke-dasharray="5 1"/>
<path d="M908 258.500h2"/>
</g>
<g fill="none" stroke="#0f3850">
<path d="M662 390.500h88M662 392.500h88"/>
<path d="M672 399.500h78M665 403.500h85M672 407.500h78M665 412.500h85" stroke-dasharray="3 1 2 2 5 1"/>
<path d="M888 401.500h24M890 407.500h22M888 412.500h24" stroke-dasharray="6 1"/>
</g>
<g fill="none" stroke="#6e4a1e">
<path d="M600 489.500h30M612 493.500h20M630 491.500h24M650 496.500h32M680 491.500h16M695 497.500h30M725 493.500h24M745 497.500h18M760 490.500h24M782 494.500h32M812 490.500h22M832 497.500h26M850 500.500h24M872 494.500h16M888 500.500h24"/>
</g>
<g fill="none" stroke="#5e3a26">
<path d="M680 566.500h16M696 562.500h14M710 558.500h12M722 554.500h18M745 566.500h12M758 562.500h16M775 558.500h16M800 566.500h10M812 562.500h8M825 570.500h18M840 565.500h14M856 560.500h16M872 565.500h28"/>
</g>

<!-- cursors -->
<path d="M607.500 74V788" stroke="#cc4f55"/>
<path d="M612 101V788" stroke="#8ae898" stroke-opacity=".85" stroke-width="2"/>
<path d="M612 102V127" stroke="#f0c080" stroke-width="2"/>
<path d="M600.500 76.500h14l-7 8.500z" fill="#6e1c22" stroke="#fff"/>
<path d="M862 353l19 13-9 2-3 9z" fill="#c9d2d6" stroke="#7a858a"/>

<!-- TCP backgrounds -->
<g>
<rect y="101" width="218" height="68" fill="#702528"/><rect y="142" width="218" height="27" fill="#601b21"/><rect y="162" width="218" height="7" fill="#521519"/><rect y="169" width="218" height="3" fill="#3a3a3a"/>
<rect y="172" width="218" height="68" fill="#6a4615"/><rect y="181" width="218" height="32" fill="#5f3e12"/><rect y="213" width="218" height="27" fill="#4e3110"/><rect y="240" width="218" height="3" fill="#3c3c3c"/>
<rect y="243" width="218" height="67" fill="#8d8d8d"/><rect y="277" width="218" height="33" fill="#6e6e6e"/><rect y="310" width="218" height="3" fill="#3c3c3c"/>
<rect y="313" width="218" height="68" fill="#8d8d8d"/><rect y="347" width="218" height="34" fill="#6e6e6e"/><rect y="381" width="218" height="3" fill="#3c3c3c"/>
<rect y="384" width="218" height="68" fill="#04506f"/><rect y="407" width="218" height="22" fill="#034362"/><rect y="429" width="218" height="23" fill="#012f47"/><rect y="452" width="218" height="3" fill="#3c3c3c"/>
<rect y="455" width="218" height="69" fill="#8a5a24"/><rect y="473" width="218" height="51" fill="#6f4a20"/><rect y="505" width="218" height="19" fill="#5e3b12"/><rect y="524" width="218" height="3" fill="#3c3c3c"/>
<rect y="527" width="218" height="68" fill="#7b4b2b"/><rect y="545" width="218" height="10" fill="#6e2a27"/><rect y="555" width="218" height="22" fill="#70452a"/><rect y="577" width="218" height="18" fill="#5f3a15"/><rect y="595" width="218" height="3" fill="#3c3c3c"/>
<rect x="1.500" y="598.500" width="216" height="69" fill="#2c2c2c" stroke="#c4c8c8"/><rect x="2" y="599" width="214" height="36" fill="#3f4448"/><rect x="2" y="635" width="214" height="12" fill="#3a4046"/>

<!-- number strips -->
<rect x="218" y="101" width="18" height="68" fill="#c95c62"/><rect x="218" y="114" width="18" height="55" fill="#bb5056"/><rect x="218" y="150" width="18" height="19" fill="#a8464c"/>
<rect x="218" y="172" width="18" height="68" fill="#ab8350"/><rect x="218" y="186" width="18" height="54" fill="#9f7745"/><rect x="218" y="205" width="18" height="35" fill="#8a6437"/>
<rect x="218" y="243" width="18" height="67" fill="#f2f5f5"/><rect x="218" y="264" width="18" height="46" fill="#cdd6dc"/>
<rect x="218" y="313" width="18" height="68" fill="#f2f5f5"/><rect x="218" y="334" width="18" height="47" fill="#cdd6dc"/>
<rect x="218" y="384" width="18" height="68" fill="#268dbb"/><rect x="218" y="420" width="18" height="32" fill="#1f769f"/><rect x="218" y="440" width="18" height="12" fill="#1a5f85"/>
<rect x="218" y="455" width="18" height="69" fill="#ecab60"/><rect x="218" y="480" width="18" height="44" fill="#dca056"/><rect x="218" y="505" width="18" height="19" fill="#c98b4a"/>
<rect x="218" y="527" width="18" height="68" fill="#b9845f"/><rect x="218" y="542" width="18" height="53" fill="#a97553"/><rect x="218" y="570" width="18" height="25" fill="#9a6844"/>
<rect x="218" y="598" width="18" height="68" fill="#8e8e8e"/><rect x="218" y="621" width="18" height="8" fill="#6d9096"/><rect x="218" y="629" width="18" height="37" fill="#7a8489"/>
<rect x="216" y="600" width="2" height="66" fill="#2aa82a"/><circle cx="217.500" cy="634" r="3.500" fill="#3ed03e" stroke="#1a6a1a"/>

<!-- meter strip + picture -->
<rect x="236" y="101" width="14" height="567" fill="#2b2b2b"/>
<g fill="none" stroke-width="4" stroke-dasharray="2 1">
<path d="M241 109v60M246 109v60" stroke="#4a1a1a"/>
<path d="M241 215v25M246 215v25" stroke="#141414"/>
<path d="M241 269v43M246 268v44" stroke="#5a9a2e"/>
<path d="M241 357v25M246 357v25" stroke="#141414"/>
<path d="M241 428v25M246 428v25" stroke="#141414"/>
<path d="M241 485v39M246 485v39" stroke="#5a9a2e"/>
<path d="M241 570v25M246 570v25" stroke="#141414"/>
<path d="M241 607v59M246 607v59" stroke="#4a1a1a"/>
</g>
<rect x="250" y="101" width="67" height="68" fill="#2a2a2a"/><rect x="250" y="124" width="67" height="45" fill="#1f2223"/>
<rect x="250" y="172" width="67" height="68" fill="#2a2a2a"/><rect x="250" y="195" width="67" height="40" fill="#1f2223"/>
<rect x="250" y="243" width="67" height="68" fill="#2a2a2a"/><rect x="250" y="266" width="67" height="40" fill="#1f2223"/>
<rect x="250" y="313" width="67" height="68" fill="#2a2a2a"/><rect x="250" y="337" width="67" height="40" fill="#1f2223"/>
<rect x="250" y="384" width="67" height="68" fill="#2a2a2a"/><rect x="250" y="408" width="67" height="40" fill="#1f2223"/>
<rect x="250" y="455" width="67" height="69" fill="#2a2a2a"/><rect x="250" y="478" width="67" height="34" fill="#1f2223"/>
<rect x="250" y="527" width="67" height="68" fill="#2a2a2a"/><rect x="250" y="550" width="67" height="34" fill="#1f2223"/>
<rect x="250.500" y="598.500" width="67" height="69" fill="#2c2c2c" stroke="#b8bcbc"/><rect x="251" y="599" width="66" height="5" fill="#3e3e3e"/>
<path d="M250 170.500h67M250 241.500h67M250 311.500h67M250 382.500h67M250 453.500h67M250 525.500h67M250 596.500h67" stroke="#3e1e1e" stroke-width="2"/>
</g>

<!-- Drum kit -->
<g>
<ellipse cx="263" cy="113" rx="12" ry="2.500" fill="#8d7a3a"/><ellipse cx="293" cy="112" rx="8" ry="1.800" fill="#a09878"/><ellipse cx="303" cy="124" rx="6" ry="1.500" fill="#8a8468"/>
<path d="M263 113v30l-10 15M263 143l10 15M293 112v20M303 124v22l9 12M303 146l-9 12" stroke="#9a9a9a" fill="none"/>
<rect x="268" y="122" width="12" height="10" rx="2" fill="#3a1a14" stroke="#7a7a7a"/><rect x="282" y="122" width="11" height="10" rx="2" fill="#3a1a14" stroke="#7a7a7a"/><rect x="262" y="133" width="11" height="16" rx="2" fill="#4a2016"/><rect x="298" y="133" width="9" height="15" rx="2" fill="#4a2016"/>
<circle cx="285" cy="148" r="10.500" fill="#c9d0d4" stroke="#2f1612" stroke-width="1.500"/>
</g>

<!-- guitars -->
<g transform="translate(0,172)"><use href="#ne"/>
<path d="M252 52C254 44 262 42 266 38C270 34 272 30 277 29C276 34 274 38 276 40C280 41 285 40 288 38C288 44 284 48 281 49C276 51 275 55 274 59C272 65 264 68 258 65C253 62 251 57 252 52Z" fill="url(#sb)"/>
<path d="M263 43L275 39L279 44L286 41L284 47Q276 49 273 55L268 56Q264 50 263 43Z" fill="#eef0f0"/><rect x="262" y="54" width="4" height="6" fill="#eee" transform="rotate(-40 264 57)"/></g>
<g transform="translate(0,243)"><use href="#gt"/></g>
<g transform="translate(0,313)"><use href="#gt"/></g>
<g transform="translate(0,384)"><use href="#gt"/></g>

<!-- synth -->
<g><rect x="258" y="476" width="53" height="20" fill="#3a3835" stroke="#b07434" stroke-width="2"/><path d="M261 481h47M261 486h47M261 491h47" stroke="#9a9a92" stroke-width="2" stroke-dasharray="2 2"/><path d="M252 504l6-8h53l3 8z" fill="#b0702c"/><rect x="257" y="497" width="53" height="5" fill="#e8e8e4"/><path d="M258 497v3H309" stroke="#333" stroke-dasharray="1 2" fill="none"/><rect x="252" y="504" width="62" height="3" fill="#8a5420"/></g>
<!-- violins -->
<g><path d="M283 532v55" stroke="#7a4a20" stroke-width="1.500"/><path d="M254 548l14 24M262 546l12 24M270 548l10 20M312 548l-14 24M304 546l-12 24M296 548l-10 20" stroke="#6a3a2a" stroke-width="2"/><path d="M254 560q4-3 8 0q8 2 10 10q0 8-6 10q-8-2-9-10q-4-4-3-10z" fill="#b8641c"/><path d="M312 560q-4-3-8 0q-8 2-10 10q0 8 6 10q8-2 9-10q4-4 3-10z" fill="#b8641c"/><path d="M279 555q4-3 8 0q2 4 0 8q7 4 6 14q-2 12-10 12q-8 0-10-12q-1-10 6-14q-2-4 0-8z" fill="#a8521a"/><path d="M283 532v42" stroke="#2a1a10"/></g>

<!-- Track TCP details -->
<g transform="translate(0,101)"><use href="#tc"/><use href="#fg"/><circle cx="13.500" cy="17" r="8.500" fill="#f02010" stroke="#7a1010"/><circle cx="13.500" cy="17" r="3.500" fill="none" stroke="#ffd0c0" stroke-width="1.300"/>
<text class="nm" x="25.500" y="21" textLength="35" lengthAdjust="spacingAndGlyphs" style="fill:#e01818">Drums</text><text class="kv" x="142.500" y="21">V</text><text class="m" x="165.500" y="22">M</text><text class="s" x="183.500" y="22">S</text><text class="fxw" x="9" y="45" textLength="12" lengthAdjust="spacingAndGlyphs">FX</text><text class="tr" x="59" y="44">trim</text><text class="in" x="88" y="44">IN</text><text class="ro" x="125.500" y="47.500" textLength="19" lengthAdjust="spacingAndGlyphs">ROUTE</text><text class="kv" x="161" y="45">P</text><text class="tn" x="227" y="41" style="fill:#fff">1</text></g><use href="#fo" y="101"/>
<g transform="translate(0,172)"><use href="#tc"/><use href="#fg"/><use href="#ra"/><text x="13.500" y="21" style="font-size:12px;fill:#c0b8b0;text-anchor:middle">A</text>
<text class="nm" x="25.500" y="21" textLength="25" lengthAdjust="spacingAndGlyphs">Bass</text><text class="kv" x="142.500" y="21">V</text><text class="m" x="165.500" y="22">M</text><text class="s" x="183.500" y="22">S</text><text class="fxw" x="9" y="45" textLength="12" lengthAdjust="spacingAndGlyphs">FX</text><text class="tr" x="59" y="44">trim</text><text class="in" x="88" y="44">IN</text><text class="ro" x="125.500" y="47.500" textLength="19" lengthAdjust="spacingAndGlyphs">ROUTE</text><text class="kv" x="161" y="45">P</text><text class="tn" x="227" y="41" style="fill:#fff">2</text></g><use href="#fo" y="172"/>
<g transform="translate(0,243)"><use href="#tc"/><use href="#fg"/><use href="#ra"/><text x="13.500" y="21" style="font-size:12px;fill:#c0b8b0;text-anchor:middle">A</text>
<text class="nm" x="25.500" y="21" textLength="59" lengthAdjust="spacingAndGlyphs">Guit  Clean</text><text class="kv" x="142.500" y="21">V</text><text class="m" x="165.500" y="22">M</text><text class="s" x="183.500" y="22">S</text><text class="fxw" x="9" y="45" textLength="12" lengthAdjust="spacingAndGlyphs">FX</text><text class="tr" x="59" y="44">trim</text><text class="in" x="88" y="44">IN</text><text class="ro" x="125.500" y="47.500" textLength="19" lengthAdjust="spacingAndGlyphs">ROUTE</text><text class="kv" x="161" y="45">P</text><text class="tn" x="227" y="41" style="fill:#222">3</text></g><use href="#fo" y="243"/>
<g transform="translate(0,313)"><use href="#tc"/><use href="#fg"/><use href="#ra"/><text x="13.500" y="21" style="font-size:12px;fill:#c0b8b0;text-anchor:middle">A</text>
<text class="nm" x="25.500" y="21" textLength="24" lengthAdjust="spacingAndGlyphs">Lead</text><text class="kv" x="142.500" y="21">V</text><text class="m" x="165.500" y="22">M</text><text class="s" x="183.500" y="22">S</text><text class="fxw" x="9" y="45" textLength="12" lengthAdjust="spacingAndGlyphs">FX</text><text class="tr" x="59" y="44">trim</text><text class="in" x="88" y="44">IN</text><text class="ro" x="125.500" y="47.500" textLength="19" lengthAdjust="spacingAndGlyphs">ROUTE</text><text class="kv" x="161" y="45">P</text><text class="tn" x="227" y="41" style="fill:#222">4</text></g><use href="#fo" y="313"/>
<g transform="translate(0,384)"><use href="#tc"/><use href="#fg"/><use href="#ra"/><text x="13.500" y="21" style="font-size:12px;fill:#c0b8b0;text-anchor:middle">A</text>
<text class="nm" x="25.500" y="21" textLength="78" lengthAdjust="spacingAndGlyphs">Guitar Rhythm</text><text class="kv" x="142.500" y="21">V</text><text class="m" x="165.500" y="22">M</text><text class="s" x="183.500" y="22">S</text><text class="fxw" x="9" y="45" textLength="12" lengthAdjust="spacingAndGlyphs">FX</text><text class="tr" x="59" y="44">trim</text><text class="in" x="88" y="44">IN</text><text class="ro" x="125.500" y="47.500" textLength="19" lengthAdjust="spacingAndGlyphs">ROUTE</text><text class="kv" x="161" y="45">P</text><text class="tn" x="227" y="41" style="fill:#fff">5</text></g><use href="#fo" y="384"/>
<g transform="translate(0,455)"><use href="#tc"/><use href="#fg"/><use href="#ra"/><text x="13.500" y="21" style="font-size:12px;fill:#c0b8b0;text-anchor:middle">A</text><circle cx="142" cy="36" r="2.700" fill="#10a8e8"/>
<text class="nm" x="25.500" y="21" textLength="49" lengthAdjust="spacingAndGlyphs">PSR S900</text><text class="kv" x="142.500" y="21">V</text><text class="m" x="165.500" y="22">M</text><text class="s" x="183.500" y="22">S</text><text class="fxw" x="9" y="45" textLength="12" lengthAdjust="spacingAndGlyphs">FX</text><text class="tr" x="59" y="44">trim</text><text class="in" x="88" y="44">IN</text><text class="ro" x="125.500" y="47.500" textLength="19" lengthAdjust="spacingAndGlyphs">ROUTE</text><text class="kv" x="161" y="45">P</text><text class="tn" x="227" y="41" style="fill:#222">6</text></g><use href="#fo" y="456"/>
<g transform="translate(0,527)"><use href="#tc"/><use href="#fg"/><use href="#ra"/><text x="13.500" y="21" style="font-size:12px;fill:#c0b8b0;text-anchor:middle">A</text><circle cx="142" cy="36" r="2.700" fill="#10a8e8"/>
<text class="nm" x="25.500" y="21" textLength="98" lengthAdjust="spacingAndGlyphs">Orchestral Strings</text><text class="kv" x="142.500" y="21">V</text><text class="m" x="165.500" y="22">M</text><text class="s" x="183.500" y="22">S</text><text class="fxw" x="9" y="45" textLength="12" lengthAdjust="spacingAndGlyphs">FX</text><text class="tr" x="59" y="44">trim</text><text class="in" x="88" y="44">IN</text><text class="ro" x="125.500" y="47.500" textLength="19" lengthAdjust="spacingAndGlyphs">ROUTE</text><text class="kv" x="161" y="45">P</text><text class="tn" x="227" y="41" style="fill:#fff">7</text></g><use href="#fo" y="527"/>
<g transform="translate(0,598)"><use href="#tc"/><use href="#fd"/><circle cx="13.500" cy="17" r="8.500" fill="#f02010" stroke="#7a1010"/><text x="13.500" y="21" style="font-size:12px;fill:#ffd8d0;text-anchor:middle">A</text>
<text class="nm" x="25.500" y="21" textLength="32" lengthAdjust="spacingAndGlyphs" style="fill:#e01818">Chord</text><text class="kv" x="142.500" y="21">V</text><text class="m" x="165.500" y="22">M</text><text class="s" x="183.500" y="22">S</text><text class="fxw" x="9" y="45" textLength="12" lengthAdjust="spacingAndGlyphs" style="fill:#ccc;font-weight:normal">FX</text><text class="tr" x="59" y="44">trim</text><text class="in" x="88" y="44">IN</text><text class="ro" x="125.500" y="47.500" textLength="19" lengthAdjust="spacingAndGlyphs">ROUTE</text><text class="kv" x="161" y="45">P</text><text class="tn" x="227" y="41" style="fill:#fff">11</text></g><use href="#fo" y="599"/>

<!-- DIALOG -->
<g class="d">
<rect x="911.500" y="302.500" width="636" height="458" fill="#f1f3f3" stroke="#5f7f88"/>
<rect x="912" y="303" width="635" height="25" fill="#3f2320"/>
<circle cx="923" cy="315" r="7.500" fill="#8a5a3a"/><path d="M917 319a7.500 7.500 0 0 1 2-10q2 6 0 12z" fill="#5ab030"/><path d="M918 309a7.500 7.500 0 0 1 10-1q-5 1-7 5z" fill="#f0f0f0"/><path d="M921 307.800a7.500 7.500 0 0 1 8 3q-3-2-6-1z" fill="#2a90d0"/>
<text x="936" y="319" textLength="105" lengthAdjust="spacingAndGlyphs" style="fill:#8c8c8c">REAPER Preferences</text>
<path d="M1473 321h13v1h-13zM1474 315q3-1 3-3v-2h-2v-1h9v1h-2v2q0 2 3 3v3h-11z" fill="#fff"/><path d="M1478 310v6M1481 310v6" stroke="#3f2320"/>
<path d="M1527 310l10 10M1537 310l-10 10" stroke="#8c8c8c" stroke-width="1.200"/>

<!-- list -->
<rect x="918.500" y="336.500" width="139" height="387" fill="#f1f3f3" stroke="#a2a2a2"/>
<rect x="1040" y="465" width="15" height="222" fill="#c8d1d8"/>
<path d="M1044 349l4-4 4 4M1044 712l4 4 4-4" fill="none" stroke="#555" stroke-width="1.500"/>
<text x="933" y="349" textLength="38" lengthAdjust="spacingAndGlyphs">Seeking</text>
<text x="933" y="365" textLength="48" lengthAdjust="spacingAndGlyphs">Recording</text>
<text x="933" y="381" textLength="75" lengthAdjust="spacingAndGlyphs">Loop Recording</text>
<text x="933" y="397" textLength="48" lengthAdjust="spacingAndGlyphs">Rendering</text>
<text x="925" y="413" textLength="57" lengthAdjust="spacingAndGlyphs">Appearance</text>
<text x="933" y="429" textLength="28" lengthAdjust="spacingAndGlyphs">Media</text>
<text x="933" y="445" textLength="88" lengthAdjust="spacingAndGlyphs">Peaks/Waveforms</text>
<text x="933" y="461" textLength="85" lengthAdjust="spacingAndGlyphs">Fades/Crossfades</text>
<text x="933" y="477" textLength="98" lengthAdjust="spacingAndGlyphs">Track Control Panels</text>
<text x="925" y="493" textLength="77" lengthAdjust="spacingAndGlyphs">Editing Behavior</text>
<text x="933" y="509" textLength="81" lengthAdjust="spacingAndGlyphs">Envelope Display</text>
<text x="933" y="525" textLength="52" lengthAdjust="spacingAndGlyphs">Automation</text>
<text x="933" y="541" textLength="31" lengthAdjust="spacingAndGlyphs">Mouse</text>
<text x="933" y="557" textLength="76" lengthAdjust="spacingAndGlyphs">Mouse Modifiers</text>
<text x="933" y="573" textLength="52" lengthAdjust="spacingAndGlyphs">MIDI Editor</text>
<text x="925" y="589" textLength="28" lengthAdjust="spacingAndGlyphs">Media</text>
<text x="933" y="605" textLength="22" lengthAdjust="spacingAndGlyphs">MIDI</text>
<text x="933" y="621" textLength="87" lengthAdjust="spacingAndGlyphs">Video/Import/Misc</text>
<text x="925" y="637" textLength="37" lengthAdjust="spacingAndGlyphs">Plug-ins</text>
<text x="932" y="653" textLength="58" lengthAdjust="spacingAndGlyphs">Compatibility</text>
<text x="933" y="669" textLength="20" lengthAdjust="spacingAndGlyphs">VST</text>
<text x="933" y="685" textLength="56" lengthAdjust="spacingAndGlyphs">ReWire/DX</text>
<text x="933" y="701" textLength="46" lengthAdjust="spacingAndGlyphs">ReaScript</text>
<text x="933" y="717" textLength="43" lengthAdjust="spacingAndGlyphs">ReaMote</text>
<rect x="918.500" y="734.500" width="49" height="18" fill="#f4f5f5" stroke="#7a7a7a"/>
<rect x="972.500" y="734.500" width="41" height="18" fill="#f1f3f3" stroke="#a8b5bc"/>
<text x="983" y="748" textLength="19" lengthAdjust="spacingAndGlyphs">Find</text>

<!-- group 1 -->
<rect x="1062.500" y="342.500" width="476" height="379" fill="none" stroke="#d0d8dc"/>
<rect x="1067" y="338" width="171" height="9" fill="#f1f3f3"/>
<text x="1070" y="346" textLength="164" lengthAdjust="spacingAndGlyphs">Audio peak/waveform appearance</text>
<use href="#c" x="1070" y="358"/><text x="1086" y="368" textLength="138" lengthAdjust="spacingAndGlyphs">Display peaks for media items</text>
<use href="#c" x="1243" y="358"/><text x="1259" y="368" textLength="107" lengthAdjust="spacingAndGlyphs">Display while recording</text>
<use href="#u" x="1070" y="374"/><text x="1086" y="384" textLength="178" lengthAdjust="spacingAndGlyphs">Only display peaks for selected tracks</text>
<use href="#c" x="1070" y="389"/><text x="1086" y="399" textLength="318" lengthAdjust="spacingAndGlyphs">Only display peaks for tracks and items that are soloed or not muted</text>
<use href="#c" x="1070" y="413"/><text x="1086" y="423" textLength="187" lengthAdjust="spacingAndGlyphs">Antialiased peak and waveform drawing</text>
<use href="#u" x="1070" y="428"/><text x="1086" y="438" textLength="103" lengthAdjust="spacingAndGlyphs">Draw edges on peaks</text>
<use href="#u" x="1207" y="428"/><text x="1223" y="438" textLength="125" lengthAdjust="spacingAndGlyphs">Draw edges on waveforms</text>
<use href="#u" x="1369" y="428"/><text x="1385" y="438" textLength="133" lengthAdjust="spacingAndGlyphs">Draw edges on MIDI events</text>
<use href="#u" x="1070" y="454"/><text x="1086" y="464" textLength="241" lengthAdjust="spacingAndGlyphs">Draw waveform zero-lines above peaks/waveforms</text>
<use href="#u" x="1346" y="454"/><text x="1362" y="464" textLength="119" lengthAdjust="spacingAndGlyphs">Fill waveforms to zero line</text>
<use href="#c" x="1070" y="472"/><text x="1086" y="482" textLength="213" lengthAdjust="spacingAndGlyphs">Scale peaks by pre-fx volume/pan envelopes</text>
<use href="#c" x="1070" y="490"/><text x="1086" y="500" textLength="151" lengthAdjust="spacingAndGlyphs">Draw faint peaks in folder tracks</text>
<use href="#c" x="1268" y="490"/><text x="1284" y="500" textLength="221" lengthAdjust="spacingAndGlyphs">Draw faint peaks in automation envelope lanes</text>
<text x="1070" y="522" textLength="183" lengthAdjust="spacingAndGlyphs">Display MIDI CC lanes in arrange view:</text>
<rect x="1259.500" y="507.500" width="247" height="19" fill="#f1f3f3" stroke="#a8b5bc"/>
<text x="1263" y="522" textLength="202" lengthAdjust="spacingAndGlyphs">Multiple lanes when space permits (default)</text>
<path d="M1494 516l4 4 4-4" fill="none" stroke="#444" stroke-width="1.200"/>
<text x="1070" y="551" textLength="137" lengthAdjust="spacingAndGlyphs">Sample-level waveform view:</text>
<rect x="1213.500" y="535.500" width="133" height="19" fill="#f1f3f3" stroke="#a8b5bc"/>
<text x="1217" y="550" textLength="66" lengthAdjust="spacingAndGlyphs">Dots and lines</text>
<path d="M1334 544l4 4 4-4" fill="none" stroke="#444" stroke-width="1.200"/>

<!-- group 2 -->
<rect x="1071.500" y="573.500" width="459" height="146" fill="none" stroke="#d0d8dc"/>
<rect x="1076" y="570" width="70" height="8" fill="#f1f3f3"/>
<text x="1078" y="578" textLength="66" lengthAdjust="spacingAndGlyphs">Custom colors</text>
<text x="1078" y="598" textLength="166" lengthAdjust="spacingAndGlyphs">Tint media item waveform peaks to:</text>
<use href="#c" x="1259" y="588"/><text x="1276" y="599" textLength="53" lengthAdjust="spacingAndGlyphs">Track color</text>
<use href="#c" x="1349" y="588"/><text x="1365" y="599" textLength="46" lengthAdjust="spacingAndGlyphs">Item color</text>
<use href="#c" x="1430" y="588"/><text x="1447" y="599" textLength="50" lengthAdjust="spacingAndGlyphs">Take color</text>
<text x="1078" y="616" textLength="146" lengthAdjust="spacingAndGlyphs">Tint media item background to:</text>
<use href="#c" x="1259" y="606"/><text x="1276" y="617" textLength="53" lengthAdjust="spacingAndGlyphs">Track color</text>
<use href="#c" x="1349" y="606"/><text x="1365" y="617" textLength="46" lengthAdjust="spacingAndGlyphs">Item color</text>
<use href="#c" x="1430" y="606"/><text x="1447" y="617" textLength="50" lengthAdjust="spacingAndGlyphs">Take color</text>
<text x="1078" y="639" textLength="257" lengthAdjust="spacingAndGlyphs">Tint strength (0-4) for selected media item background:</text>
<rect x="1342.500" y="626.500" width="29" height="20" fill="#f4f5f5" stroke="#7a7a7a"/><text x="1348" y="641">1</text>
<text x="1382" y="639" textLength="57" lengthAdjust="spacingAndGlyphs">Unselected:</text>
<rect x="1447.500" y="626.500" width="29" height="20" fill="#f4f5f5" stroke="#7a7a7a"/><text x="1451" y="641">3</text>
<use href="#c" x="1076" y="656"/><text x="1092" y="666" textLength="386" lengthAdjust="spacingAndGlyphs">Automatically color any recording pass that adds new takes to existing media items</text>
<use href="#c" x="1076" y="677"/><text x="1092" y="687" textLength="311" lengthAdjust="spacingAndGlyphs">Automatically color any media items that share pooled MIDI events</text>
<text x="1076" y="708" textLength="446" lengthAdjust="spacingAndGlyphs">Set custom track colors from the Track menu, custom item and take colors from the Item menu.</text>

<rect x="1367.500" y="732.500" width="53" height="20" fill="#f1f3f3" stroke="#a8b5bc"/><text x="1394" y="747" style="text-anchor:middle">OK</text>
<rect x="1426.500" y="732.500" width="53" height="20" fill="#f1f3f3" stroke="#a8b5bc"/><text x="1453" y="747" style="text-anchor:middle">Cancel</text>
<rect x="1486.500" y="732.500" width="53" height="20" fill="#c8d0d6" stroke="#b4bfc6"/><text x="1513" y="747" style="text-anchor:middle;fill:#959ea3">Apply</text>
</g>
</svg>
</body></html>
